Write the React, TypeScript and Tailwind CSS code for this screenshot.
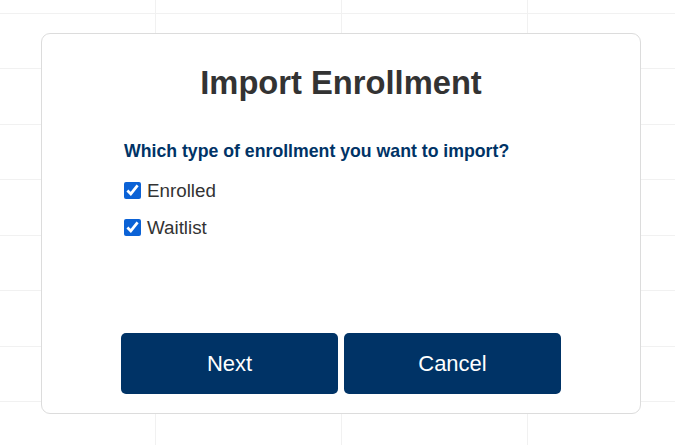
import React from 'react';

const rows = Array.from({ length: 9 });
const cols = Array.from({ length: 5 });

const App: React.FC = () => {
  return (
    <div className="relative w-[675px] h-[445px] overflow-hidden bg-white font-['Liberation_Sans',Arial,sans-serif]">
      {/* faint table grid behind the dialog */}
      <div className="absolute left-[-30px] top-[-42px] flex flex-col">
        {rows.map((_, r) => (
          <div key={r} className="flex">
            {cols.map((_, c) => (
              <div key={c} className="w-[186px] h-[55.5px] border-r border-b border-[#f1f1f1]" />
            ))}
          </div>
        ))}
      </div>

      <div className="relative pt-[33px] pl-[41px]">
        <div className="w-[600px] h-[381px] rounded-[9px] border border-[#dcdcdc] bg-white flex flex-col items-center">
          <h1 className="mt-[30px] text-[32.7px] leading-[38px] font-bold text-[#333333]">Import Enrollment</h1>

          <div className="w-[440px] mt-[38px] pl-[3px]">
            <p className="text-[17.7px] leading-[22px] font-bold text-[#003366]">
              Which type of enrollment you want to import?
            </p>
            <div className="mt-[18px] flex flex-col gap-[16px]">
              <label className="flex items-center gap-[6px] text-[18.8px] leading-[21px] text-[#333333]">
                <input type="checkbox" defaultChecked className="w-[17px] h-[17px] m-0 accent-[#0b62d6]" />
                Enrolled
              </label>
              <label className="flex items-center gap-[6px] text-[18.8px] leading-[21px] text-[#333333]">
                <input type="checkbox" defaultChecked className="w-[17px] h-[17px] m-0 accent-[#0b62d6]" />
                Waitlist
              </label>
            </div>
          </div>

          <div className="mt-auto mb-[19px] flex gap-[6px]">
            <button className="w-[217px] h-[61px] rounded-[5px] bg-[#003366] text-white text-[22px]">Next</button>
            <button className="w-[217px] h-[61px] rounded-[5px] bg-[#003366] text-white text-[22px]">Cancel</button>
          </div>
        </div>
      </div>
    </div>
  );
};

export default App;
